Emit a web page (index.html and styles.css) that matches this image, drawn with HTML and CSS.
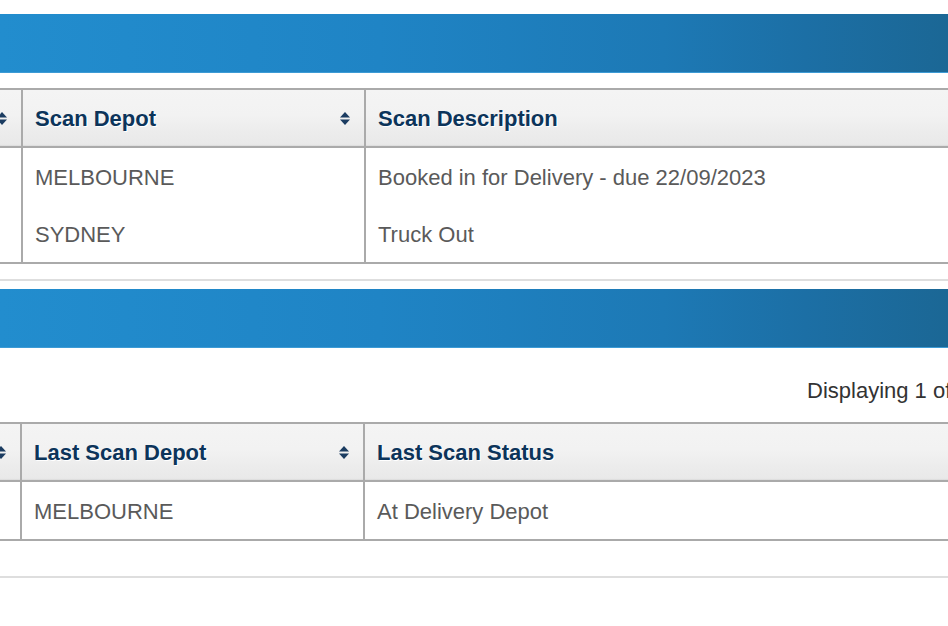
FILE: index.html
```html
<!DOCTYPE html>
<html lang="en">
<head>
<meta charset="utf-8">
<title>Consignment scans</title>
<link rel="stylesheet" href="styles.css">
</head>
<body>
<div class="page">
  <section class="panel panel-scans">
    <div class="bar"></div>
    <table class="grid">
      <thead>
        <tr>
          <th class="col-a"><div class="th-inner th-end"><svg class="sort" viewBox="0 0 10 13" width="10" height="13"><polygon points="0,5.5 5,0 10,5.5"/><polygon points="0,7.5 10,7.5 5,13"/></svg></div></th>
          <th class="col-b"><div class="th-inner"><span>Scan Depot</span><svg class="sort" viewBox="0 0 10 13" width="10" height="13"><polygon points="0,5.5 5,0 10,5.5"/><polygon points="0,7.5 10,7.5 5,13"/></svg></div></th>
          <th class="col-c"><div class="th-inner"><span>Scan Description</span></div></th>
        </tr>
      </thead>
      <tbody>
        <tr><td class="col-a"></td><td class="col-b">MELBOURNE</td><td class="col-c">Booked in for Delivery - due 22/09/2023</td></tr>
        <tr><td class="col-a"></td><td class="col-b">SYDNEY</td><td class="col-c">Truck Out</td></tr>
      </tbody>
    </table>
    <div class="rule"></div>
  </section>

  <section class="panel panel-last">
    <div class="bar"></div>
    <div class="pager">Displaying 1 of 1</div>
    <table class="grid grid-shift">
      <thead>
        <tr>
          <th class="col-a"><div class="th-inner th-end"><svg class="sort" viewBox="0 0 10 13" width="10" height="13"><polygon points="0,5.5 5,0 10,5.5"/><polygon points="0,7.5 10,7.5 5,13"/></svg></div></th>
          <th class="col-b"><div class="th-inner"><span>Last Scan Depot</span><svg class="sort" viewBox="0 0 10 13" width="10" height="13"><polygon points="0,5.5 5,0 10,5.5"/><polygon points="0,7.5 10,7.5 5,13"/></svg></div></th>
          <th class="col-c"><div class="th-inner"><span>Last Scan Status</span></div></th>
        </tr>
      </thead>
      <tbody>
        <tr><td class="col-a"></td><td class="col-b">MELBOURNE</td><td class="col-c">At Delivery Depot</td></tr>
      </tbody>
    </table>
    <div class="rule rule-low"></div>
  </section>
</div>
</body>
</html>
```

FILE: styles.css
```css
html, body {
  margin: 0;
  padding: 0;
  background: #ffffff;
  overflow: hidden;
}

body {
  font-family: "Liberation Sans", Arial, sans-serif;
  font-size: 22px;
  color: #5a5a5a;
}

.page {
  width: 948px;
  overflow: hidden;
  padding-top: 14px;
}

.panel-last {
  margin-top: 8px;
}

.bar {
  height: 58px;
  background: linear-gradient(to right, #228dce 0%, #1f84c5 40%, #1d79b5 70%, #1c6fa5 85%, #1b6795 100%);
  border-bottom: 1px solid #3d9bd5;
}

.grid {
  border-collapse: separate;
  border-spacing: 0;
  width: 1400px;
  margin-left: -100px;
  margin-top: 15px;
  border-top: 2px solid #aaaaaa;
  border-bottom: 2px solid #aaaaaa;
  table-layout: fixed;
}

.grid-shift {
  margin-left: -101px;
  margin-top: 19px;
}

.col-a { width: 121px; }
.col-b { width: 343px; }
.col-c { width: auto; }

.grid th,
.grid td {
  padding: 0 0 0 12px;
  text-align: left;
  white-space: nowrap;
  box-sizing: border-box;
}

.grid th + th,
.grid td + td {
  border-left: 2px solid #aaaaaa;
}

.grid th {
  height: 58px;
  background: linear-gradient(to bottom, #f4f4f4 0%, #f2f2f2 45%, #ececec 75%, #e9e9e9 97%, #dadada 100%);
  border-bottom: 2px solid #aaaaaa;
  font-weight: bold;
  color: #0c345a;
  text-shadow: 1px 1px 0 #ffffff;
  vertical-align: middle;
  padding-top: 1px;
}

.th-inner {
  display: flex;
  align-items: center;
  justify-content: space-between;
  padding-right: 14px;
}

.th-end {
  justify-content: flex-end;
}

.sort {
  display: block;
  fill: #1b3c61;
  flex: none;
}

.grid td {
  height: 57px;
  vertical-align: middle;
  padding-top: 3px;
}

.rule {
  height: 2px;
  background: #dedede;
  margin-top: 15px;
}

.rule-low {
  margin-top: 35px;
}

.pager {
  color: #333333;
  padding-left: 807px;
  margin-top: 30px;
  line-height: 25px;
  white-space: nowrap;
}
```
